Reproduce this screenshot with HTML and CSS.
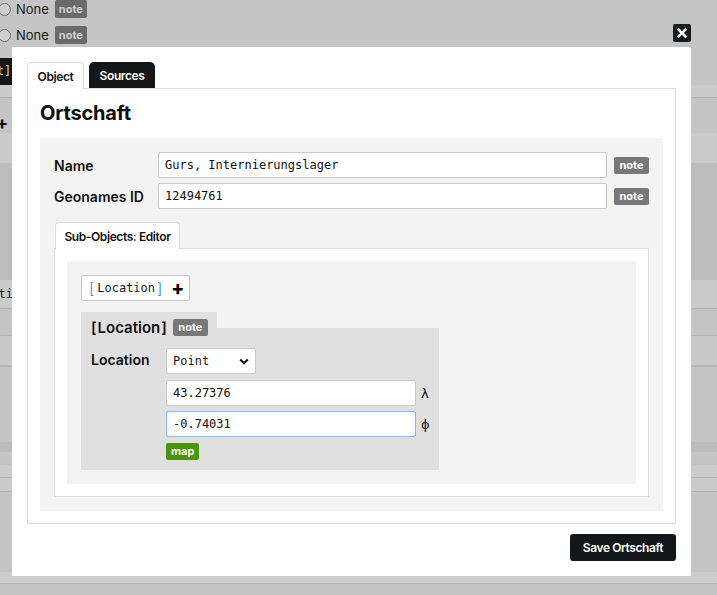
FILE: index.html
```html
<!DOCTYPE html>
<html>
<head>
<meta charset="utf-8">
<title>Ortschaft</title>
<link rel="stylesheet" href="styles.css">
</head>
<body>
<div class="page">
  <div class="bg-row"><span class="radio"></span><span class="none">None</span><span class="bg-note">note</span></div>
  <div class="bg-row"><span class="radio"></span><span class="none">None</span><span class="bg-note">note</span></div>
  <div class="bg-r3"><span class="bg-dark">[Ort]</span></div>
  <div class="bg-band"></div>
  <div class="bg-plus">+</div>
  <div class="bg-light"></div>
  <div class="bg-mid"></div>
  <div class="bg-text"><span class="bg-ti">Notiz</span></div>
  <div class="bg-s1"></div>
  <div class="bg-s2"></div>
  <div class="bg-s3"></div>
  <div class="bg-dk"></div>
  <div class="bg-s4"></div>
  <div class="bg-b1"></div>
  <div class="bg-b2"></div>
  <div class="bg-s5"></div>
  <div class="bg-b3"></div>
</div>

<button class="close" aria-label="Close">
  <svg width="18" height="18" viewBox="0 0 18 18"><path d="M5.5 5.5 L12.5 12.5 M12.5 5.5 L5.5 12.5" stroke="#fff" stroke-width="2.6" stroke-linecap="square"/></svg>
</button>

<div class="modal">
  <div class="tabs">
    <div class="tab tab-active tab-obj">Object</div>
    <div class="tab tab-dark">Sources</div>
  </div>
  <div class="panel">
    <h1 class="title">Ortschaft</h1>
    <div class="form">
      <div class="row">
        <label class="label">Name</label>
        <input class="input" value="Gurs, Internierungslager">
        <span class="note">note</span>
      </div>
      <div class="row">
        <label class="label">Geonames ID</label>
        <input class="input" value="12494761">
        <span class="note">note</span>
      </div>
      <div class="subtabs">
        <div class="tab tab-active tab-sub">Sub-Objects: Editor</div>
      </div>
      <div class="subpanel">
        <div class="subarea">
          <button class="add"><span class="br br-l">[</span><span class="mono">Location</span><span class="br br-r">]</span><span class="plus">+</span></button>
          <div class="block">
            <div class="block-title"><span class="block-name">[<span class="bn">Location</span>]</span><span class="note">note</span></div>
            <div class="loc-row">
              <label class="label loc-label">Location</label>
              <div class="fields">
                <div class="select"><span class="mono">Point</span>
                  <svg width="10" height="7" viewBox="0 0 10 7"><path d="M1.2 1.4 L5 5.2 L8.8 1.4" fill="none" stroke="#111" stroke-width="2.1"/></svg>
                </div>
                <div class="coord"><input class="input coord-input" value="43.27376"><span class="greek">λ</span></div>
                <div class="coord"><input class="input coord-input focus" value="-0.74031"><span class="greek">ϕ</span></div>
                <div class="map-row"><span class="map">map</span></div>
              </div>
            </div>
          </div>
        </div>
      </div>
    </div>
  </div>
  <div class="footer"><button class="save">Save Ortschaft</button></div>
</div>
</body>
</html>
```

FILE: styles.css
```css
* { box-sizing: border-box; }
html, body { margin: 0; height: 100%; }
body {
  background: #c5c5c5;
  font-family: Inter, "Noto Sans", sans-serif;
  color: #111;
  overflow: hidden;
}

/* background page (dimmed by the modal overlay) */
.page { display: flex; flex-direction: column; }
.bg-row { display: flex; align-items: center; height: 18px; margin-bottom: 8px; margin-left: -2px; gap: 5px; }
.radio { width: 13px; height: 13px; border: 1px solid #6e6e6e; border-radius: 50%; background: #cfcfcf; }
.none { font-size: 13px; color: #1a1a1a; }
.bg-note { background: #6a6a6a; color: #cfcfcf; font-size: 11px; font-weight: 700; padding: 0 4px; height: 18px; line-height: 18px; border-radius: 2px; margin-left: 1px; }
.bg-r3 { height: 27px; margin-top: 6px; display: flex; }
.bg-dark { margin-left: -25px; height: 27px; padding: 0 8px 0 0; background: #161616; color: #ccc; font-family: "DejaVu Sans Mono", monospace; font-size: 12px; line-height: 27px; width: 60px; }
.bg-band { height: 13px; background: #cbcbcb; border-bottom: 1px solid #b5b5b5; }
.bg-plus { height: 20px; font-weight: 700; font-size: 18px; line-height: 20px; margin-top: 15px; margin-left: -4px; color: #111; }
.bg-light { height: 30px; background: #cbcbcb; }
.bg-mid { height: 117px; background: #bdbdbd; }
.bg-text { height: 29px; background: #cbcbcb; border-bottom: 1px solid #b2b2b2; display: flex; align-items: center; }
.bg-ti { font-family: "DejaVu Sans Mono", monospace; font-size: 12px; color: #222; margin-left: -16px; }
.bg-s1 { height: 27px; border-bottom: 1px solid #b8b8b8; }
.bg-s2 { height: 31px; border-bottom: 2px solid #b8b8b8; background: #c9c9c9; }
.bg-s3 { height: 75px; }
.bg-dk { height: 10px; background: #bcbcbc; }
.bg-s4 { height: 13px; }
.bg-b1 { height: 13px; background: #cbcbcb; border-bottom: 1px solid #b5b5b5; }
.bg-b2 { height: 14px; background: #cbcbcb; border-bottom: 1px solid #b5b5b5; }
.bg-s5 { height: 80px; }
.bg-b3 { height: 12px; background: #cdcdcd; border-bottom: 1px solid #b8b8b8; }

/* close */
.close {
  position: absolute; left: 673px; top: 24px;
  width: 18px; height: 18px; padding: 0; border: 0;
  background: #151a1c; border-radius: 2px;
  display: flex; align-items: center; justify-content: center;
}

/* modal */
.modal {
  position: absolute; left: 12px; top: 47px; width: 679px;
  background: #fff; padding: 15px;
}
.tabs { display: flex; gap: 5px; height: 26px; align-items: flex-end; }
.tab {
  font-size: 12px; font-weight: 600; padding: 0;
  height: 26px; line-height: 26px; border-radius: 4px 4px 0 0;
  white-space: nowrap; text-align: center; letter-spacing: -0.4px;
}
.tab-active {
  background: #fff; border: 1px solid #ddd; border-bottom: 0;
  height: 27px; margin-bottom: -1px; position: relative; z-index: 1;
  line-height: 27px; color: #111;
}
.tab-obj { width: 57px; }
.tab-dark { width: 66px; background: #141617; color: #fff; border-radius: 5px 5px 0 0; line-height: 27px; }

.panel { border: 1px solid #ddd; padding: 12px; }
.title { margin: 0 0 12px; font-size: 20px; line-height: 25px; font-weight: 700; color: #0c0c0c; letter-spacing: -0.2px; }

.form { background: #f3f3f3; padding: 14px; }
.row { display: flex; align-items: center; height: 26px; margin-bottom: 5px; }
.label { width: 104px; font-size: 14px; font-weight: 600; flex: none; color: #111; }
.input {
  height: 26px; border: 1px solid #c9c9c9; border-radius: 2px; background: #fff;
  font-family: "DejaVu Sans Mono", monospace; font-size: 12px; color: #111;
  padding: 0 6px; outline: none;
}
.row .input { width: 449px; }
.note {
  display: inline-block; background: #777; color: #fff; font-size: 11px; font-weight: 700;
  height: 17px; line-height: 17px; border-radius: 2px; width: 35px; text-align: center;
}
.row .note { margin-left: 7px; }

.subtabs { display: flex; margin-top: 13px; padding-left: 1px; }
.tab-sub { width: 125px; }
.subpanel { border: 1px solid #ddd; background: #fff; padding: 12px; }
.subarea { background: #f3f3f3; padding: 14px; }

.add {
  display: flex; align-items: center; height: 26px; width: 109px;
  border: 1px solid #c9c9c9; border-radius: 2px; background: #fff; padding: 0 0 0 7px;
  font-family: Inter, sans-serif;
}
.mono { font-family: "DejaVu Sans Mono", monospace; font-size: 12px; color: #1a1a1a; }
.br { color: #2a86d8; font-size: 15px; font-weight: 300; line-height: 1; }
.br-l { margin-right: 3px; }
.br-r { margin-left: 2px; }
.plus { font-size: 19px; font-weight: 800; margin-left: 9px; color: #000; line-height: 1; }

.block {
  margin-top: 11px; width: 358px;
  background:
    linear-gradient(#e0e0e0, #e0e0e0) 0 0 / 136px 16px no-repeat,
    linear-gradient(#e0e0e0, #e0e0e0) 0 16px / 100% calc(100% - 16px) no-repeat;
  padding: 7px 10px 10px;
}
.block-title { display: flex; align-items: center; height: 17px; gap: 6px; }
.block-name { font-size: 15px; font-weight: 600; color: #111; }
.bn { margin: 0 1px; }
.loc-row { display: flex; margin-top: 12px; }
.loc-label { width: 75px; line-height: 24px; }
.fields { display: flex; flex-direction: column; gap: 6px; }
.select {
  width: 90px; height: 26px; background: #fff; border: 1px solid #c9c9c9; border-radius: 2px;
  display: flex; align-items: center; justify-content: space-between; padding: 0 6px;
}
.coord { display: flex; align-items: center; gap: 5px; }
.coord + .coord { margin-top: -1px; }
.coord-input { width: 250px; }
.focus { border-color: #86bde6; box-shadow: inset 0 0 2px rgba(120,180,230,0.35); }
.greek { font-size: 13px; color: #111; font-family: "DejaVu Sans", sans-serif; }
.map-row { display: flex; height: 17px; }
.map {
  display: block; background: #4a9606; color: #fff; font-size: 11px; font-weight: 700;
  height: 17px; line-height: 17px; padding: 0 5px; border-radius: 2px;
}

.footer { display: flex; justify-content: flex-end; margin-top: 10px; }
.save {
  height: 27px; width: 106px; background: #131719; color: #fff; border: 0; border-radius: 3px;
  font-family: Inter, sans-serif; font-size: 12px; font-weight: 600; padding: 0; letter-spacing: -0.4px;
}
```
